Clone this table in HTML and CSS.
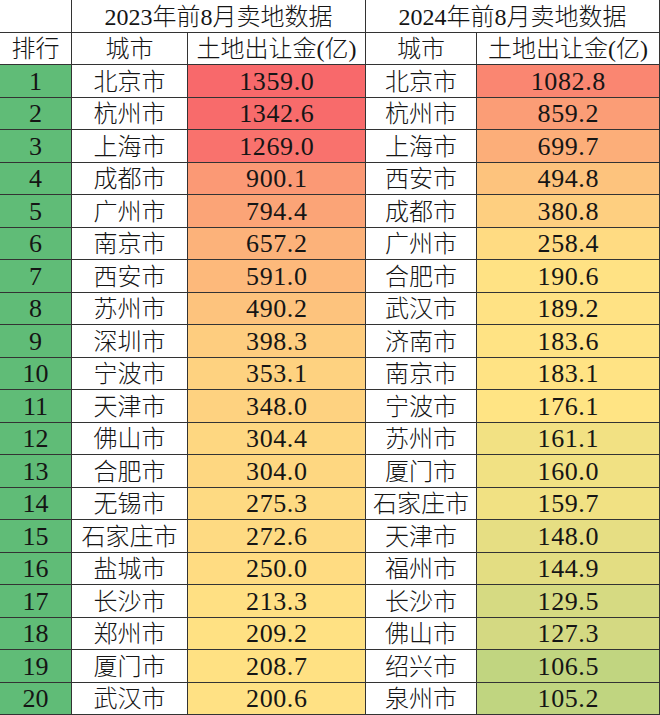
FILE: index.html
```html
<!DOCTYPE html>
<html lang="zh-CN">
<head>
<meta charset="utf-8">
<title>卖地数据</title>
<link rel="stylesheet" href="styles.css">
</head>
<body>
<div class="sheet">
  <div class="cell blank"></div>
  <div class="cell title span2">2023年前8月卖地数据</div>
  <div class="cell title span2">2024年前8月卖地数据</div>

  <div class="cell head">排行</div>
  <div class="cell head">城市</div>
  <div class="cell head">土地出让金(亿)</div>
  <div class="cell head">城市</div>
  <div class="cell head">土地出让金(亿)</div>

  <div class="cell rank">1</div><div class="cell city">北京市</div><div class="cell val" style="background:#F8696B">1359.0</div><div class="cell city">北京市</div><div class="cell val" style="background:#FA8671">1082.8</div>
  <div class="cell rank">2</div><div class="cell city">杭州市</div><div class="cell val" style="background:#F86B6B">1342.6</div><div class="cell city">杭州市</div><div class="cell val" style="background:#FB9D76">859.2</div>
  <div class="cell rank">3</div><div class="cell city">上海市</div><div class="cell val" style="background:#F9726D">1269.0</div><div class="cell city">上海市</div><div class="cell val" style="background:#FCAE79">699.7</div>
  <div class="cell rank">4</div><div class="cell city">成都市</div><div class="cell val" style="background:#FB9975">900.1</div><div class="cell city">西安市</div><div class="cell val" style="background:#FDC37D">494.8</div>
  <div class="cell rank">5</div><div class="cell city">广州市</div><div class="cell val" style="background:#FBA477">794.4</div><div class="cell city">成都市</div><div class="cell val" style="background:#FECF80">380.8</div>
  <div class="cell rank">6</div><div class="cell city">南京市</div><div class="cell val" style="background:#FCB27A">657.2</div><div class="cell city">广州市</div><div class="cell val" style="background:#FFDB82">258.4</div>
  <div class="cell rank">7</div><div class="cell city">西安市</div><div class="cell val" style="background:#FDB97B">591.0</div><div class="cell city">合肥市</div><div class="cell val" style="background:#FFE284">190.6</div>
  <div class="cell rank">8</div><div class="cell city">苏州市</div><div class="cell val" style="background:#FDC37D">490.2</div><div class="cell city">武汉市</div><div class="cell val" style="background:#FFE284">189.2</div>
  <div class="cell rank">9</div><div class="cell city">深圳市</div><div class="cell val" style="background:#FECD7F">398.3</div><div class="cell city">济南市</div><div class="cell val" style="background:#FFE384">183.6</div>
  <div class="cell rank">10</div><div class="cell city">宁波市</div><div class="cell val" style="background:#FED280">353.1</div><div class="cell city">南京市</div><div class="cell val" style="background:#FFE384">183.1</div>
  <div class="cell rank">11</div><div class="cell city">天津市</div><div class="cell val" style="background:#FED280">348.0</div><div class="cell city">宁波市</div><div class="cell val" style="background:#FFE484">176.1</div>
  <div class="cell rank">12</div><div class="cell city">佛山市</div><div class="cell val" style="background:#FED781">304.4</div><div class="cell city">苏州市</div><div class="cell val" style="background:#F2E183">161.1</div>
  <div class="cell rank">13</div><div class="cell city">合肥市</div><div class="cell val" style="background:#FED781">304.0</div><div class="cell city">厦门市</div><div class="cell val" style="background:#F1E183">160.0</div>
  <div class="cell rank">14</div><div class="cell city">无锡市</div><div class="cell val" style="background:#FEDA82">275.3</div><div class="cell city">石家庄市</div><div class="cell val" style="background:#F1E183">159.7</div>
  <div class="cell rank">15</div><div class="cell city">石家庄市</div><div class="cell val" style="background:#FEDA82">272.6</div><div class="cell city">天津市</div><div class="cell val" style="background:#E6DE83">148.0</div>
  <div class="cell rank">16</div><div class="cell city">盐城市</div><div class="cell val" style="background:#FFDC82">250.0</div><div class="cell city">福州市</div><div class="cell val" style="background:#E3DD82">144.9</div>
  <div class="cell rank">17</div><div class="cell city">长沙市</div><div class="cell val" style="background:#FFE083">213.3</div><div class="cell city">长沙市</div><div class="cell val" style="background:#D6DA82">129.5</div>
  <div class="cell rank">18</div><div class="cell city">郑州市</div><div class="cell val" style="background:#FFE183">209.2</div><div class="cell city">佛山市</div><div class="cell val" style="background:#D4D982">127.3</div>
  <div class="cell rank">19</div><div class="cell city">厦门市</div><div class="cell val" style="background:#FFE183">208.7</div><div class="cell city">绍兴市</div><div class="cell val" style="background:#C1D580">106.5</div>
  <div class="cell rank">20</div><div class="cell city">武汉市</div><div class="cell val" style="background:#FFE184">200.6</div><div class="cell city">泉州市</div><div class="cell val" style="background:#C0D580">105.2</div>
</div>
</body>
</html>
```

FILE: styles.css
```css
html, body {
  margin: 0;
  padding: 0;
  background: #ffffff;
}

.sheet {
  display: grid;
  grid-template-columns: 72px 116px 178px 111px 183px;
  grid-auto-rows: 32.5px;
  width: 660px;
  font-family: "Liberation Serif", "Noto Sans CJK SC", serif;
  font-size: 24px;
  font-weight: 300;
  color: #151515;
}

.cell {
  box-sizing: border-box;
  border-right: 1px solid #333333;
  border-bottom: 1px solid #333333;
  display: flex;
  align-items: center;
  justify-content: center;
  padding-top: 2px;
  white-space: nowrap;
  line-height: 1;
  background: #ffffff;
  overflow: hidden;
}

.span2 {
  grid-column: span 2;
}

.rank {
  background: #60BC77;
  font-size: 26px;
}

.val {
  font-size: 26px;
  letter-spacing: 0.6px;
  padding-left: 0.6px;
}
```
